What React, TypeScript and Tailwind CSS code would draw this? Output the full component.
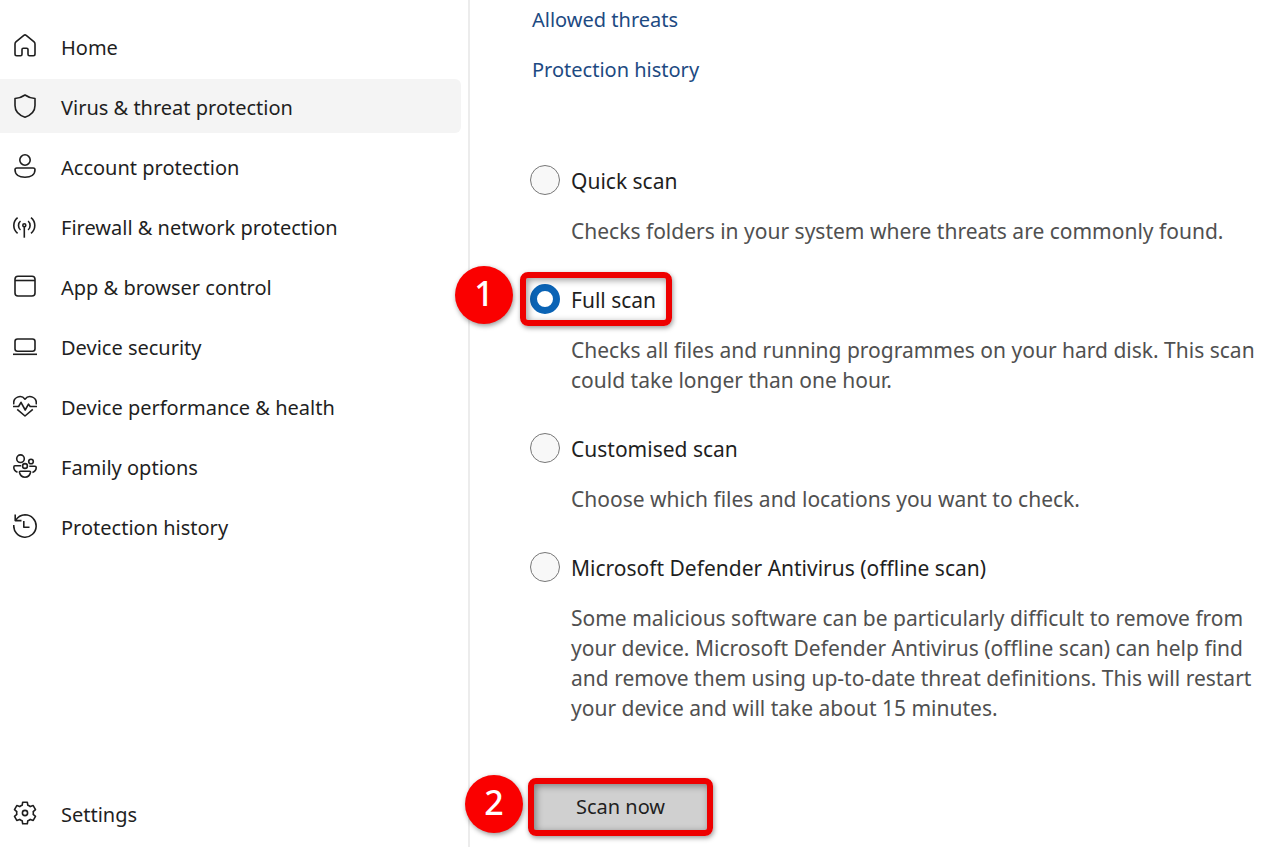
import { useState, type ReactNode } from 'react';

const navItems = [
  { id: 'home', label: 'Home', icon: <HomeIcon /> },
  { id: 'virus', label: 'Virus & threat protection', icon: <ShieldIcon /> },
  { id: 'account', label: 'Account protection', icon: <AccountIcon /> },
  { id: 'firewall', label: 'Firewall & network protection', icon: <FirewallIcon /> },
  { id: 'app', label: 'App & browser control', icon: <AppIcon /> },
  { id: 'device', label: 'Device security', icon: <DeviceIcon /> },
  { id: 'health', label: 'Device performance & health', icon: <HealthIcon /> },
  { id: 'family', label: 'Family options', icon: <FamilyIcon /> },
  { id: 'history', label: 'Protection history', icon: <HistoryIcon /> },
];

const scanOptions = [
  {
    id: 'quick',
    label: 'Quick scan',
    description: 'Checks folders in your system where threats are commonly found.',
  },
  {
    id: 'full',
    label: 'Full scan',
    description:
      'Checks all files and running programmes on your hard disk. This scan could take longer than one hour.',
    step: 1,
  },
  {
    id: 'custom',
    label: 'Customised scan',
    description: 'Choose which files and locations you want to check.',
  },
  {
    id: 'offline',
    label: 'Microsoft Defender Antivirus (offline scan)',
    description:
      'Some malicious software can be particularly difficult to remove from your device. Microsoft Defender Antivirus (offline scan) can help find and remove them using up-to-date threat definitions. This will restart your device and will take about 15 minutes.',
  },
];

function Icon({ children }: { children: ReactNode }) {
  return (
    <svg
      viewBox="0 0 24 24"
      className="w-6 h-6 shrink-0"
      fill="none"
      stroke="currentColor"
      strokeWidth="1.6"
      strokeLinejoin="round"
      aria-hidden="true"
    >
      {children}
    </svg>
  );
}

function HomeIcon() {
  return (
    <Icon>
      <path d="M10.8 1.3 2.9 7.9Q2 8.7 2 9.9V20Q2 21.7 3.7 21.7H7.6Q9 21.7 9 20.3V15.5Q9 14.2 10.3 14.2H13.7Q15 14.2 15 15.5V20.3Q15 21.7 16.4 21.7H20.3Q22 21.7 22 20V9.9Q22 8.7 21.1 7.9L13.2 1.3Q12 .4 10.8 1.3Z" />
    </Icon>
  );
}

function ShieldIcon() {
  return (
    <Icon>
      <path d="M12 1C9 3.2 6 4.2 2 4.500V11.500C2 17 5.500 21 12 23.200C18.500 21 22 17 22 11.500V4.500C18 4.200 15 3.200 12 1Z" />
    </Icon>
  );
}

function AccountIcon() {
  return (
    <Icon>
      <circle cx="12" cy="6" r="5.2" />
      <path d="M3.8 14H20.2Q22 14 22 15.8C22 20.5 18 23.2 12 23.2S2 20.5 2 15.8Q2 14 3.8 14Z" />
    </Icon>
  );
}

function FirewallIcon() {
  return (
    <Icon>
      <circle cx="11.3" cy="11.3" r="1.5" />
      <path d="M11.3 12.8V23.7" />
      <path d="M7.5 7Q5.5 8.6 5.5 11.5T7.5 16M15.1 7Q17.1 8.6 17.1 11.5T15.1 16" />
      <path d="M4.6 3.7Q.8 6.9.8 11.5T4.6 19.3M18 3.7Q21.8 6.9 21.8 11.5T18 19.3" />
    </Icon>
  );
}

function AppIcon() {
  return (
    <Icon>
      <rect x="2" y="2.2" width="20" height="19.8" rx="3" />
      <path d="M2 6.5H22" />
    </Icon>
  );
}

function DeviceIcon() {
  return (
    <Icon>
      <rect x="2" y="5" width="20" height="12.3" rx="2.5" />
      <path d="M0 20.3H24" />
    </Icon>
  );
}

function HealthIcon() {
  return (
    <Icon>
      <path d="M.8 10.4C-.3 3.2 8-.1 12 5.2C16-.1 24.3 3.2 23.2 10.4" />
      <path d="M0 12.5H5.6L8 8.3L12.2 16L15.500 10.2L17.2 12.5H24" />
      <path d="M4.2 15.3 12 22 19.8 15.3" />
    </Icon>
  );
}

function FamilyIcon() {
  return (
    <Icon>
      <circle cx="7.5" cy="4.7" r="3.8" />
      <circle cx="18" cy="7.5" r="2.3" />
      <circle cx="12" cy="12" r="2.4" />
      <path d="M8.2 11.8H2Q.8 11.8.8 13.2Q.8 16.7 4.5 18.3" />
      <path d="M16.3 12.2H22Q23.2 12.2 23.2 13.5Q23.2 17 19.4 18.6" />
      <path d="M7.5 17.3H16.5Q17.7 17.3 17.5 18.5C16.7 21.8 15 23.2 12 23.2S7.3 21.8 6.5 18.5Q6.3 17.3 7.5 17.3Z" />
    </Icon>
  );
}

function HistoryIcon() {
  return (
    <Icon>
      <path d="M.8 11A11.2 11.2 0 1 0 12 .8Q6 1 2.6 6.4" />
      <path d="M2.2 .5V6.6H8.5M10.8 7V13.2H16.5" />
    </Icon>
  );
}

function SettingsIcon() {
  return (
    <Icon>
      <path d="M14.3 1.2 14.8 4.2Q16.2 4.6 17.3 5.6L20.2 4.6 22.5 8.6 20.2 10.6Q20.500 12 20.2 13.4L22.5 15.4 20.2 19.4 17.3 18.4Q16.2 19.4 14.8 19.8L14.3 22.8H9.7L9.2 19.8Q7.8 19.4 6.7 18.4L3.8 19.4 1.5 15.4 3.8 13.4Q3.5 12 3.8 10.6L1.5 8.6 3.8 4.6 6.7 5.6Q7.8 4.6 9.2 4.2L9.7 1.2Z" />
      <circle cx="12" cy="12" r="2.6" />
    </Icon>
  );
}

function NavItem({ icon, label, active = false, onClick }: {
  icon: ReactNode;
  label: string;
  active?: boolean;
  onClick: () => void;
}) {
  return (
    <button
      onClick={onClick}
      className={`w-full h-[54px] pl-[13px] flex items-center gap-6 rounded-r-md text-left text-[20px] ${
        active ? 'bg-[#f4f4f4]' : ''
      }`}
    >
      {icon}
      <span className="pt-1">{label}</span>
    </button>
  );
}

// Red frame and numbered badge pointing out a step
function Frame({ className }: { className: string }) {
  return (
    <span
      className={`absolute pointer-events-none rounded-lg border-6 border-[#ee0000] shadow-[1px_2px_5px_rgba(0,0,0,0.4),inset_2px_2px_7px_rgba(0,0,0,0.4)] ${className}`}
    />
  );
}

function Badge({ step, className }: { step: number; className: string }) {
  return (
    <span
      className={`absolute pointer-events-none w-[58px] h-[58px] pb-1 rounded-full bg-[#fa0000] text-white text-[34px] font-medium flex items-center justify-center shadow-[1px_2px_5px_rgba(0,0,0,0.4)] ${className}`}
    >
      {step}
    </span>
  );
}

export default function App() {
  const [page, setPage] = useState('virus');
  const [scan, setScan] = useState('full');

  return (
    <div className="min-h-screen flex bg-white text-[#1f1f1f] font-['Noto_Sans','Open_Sans',sans-serif]">
      {/* Sidebar */}
      <nav className="w-[470px] shrink-0 border-r-2 border-[#ececec] pt-[19px] pb-[7px] pr-[7px] flex flex-col gap-1.5">
        {navItems.map(item => (
          <NavItem
            key={item.id}
            icon={item.icon}
            label={item.label}
            active={page === item.id}
            onClick={() => setPage(item.id)}
          />
        ))}
        <div className="mt-auto">
          <NavItem
            icon={<SettingsIcon />}
            label="Settings"
            active={page === 'settings'}
            onClick={() => setPage('settings')}
          />
        </div>
      </nav>

      {/* Scan options */}
      <main className="flex-1 min-w-0 pl-[60px] pr-6 pt-[5px] pb-3">
        <div className="pl-0.5 flex flex-col items-start gap-5 text-[20px] leading-[30px] text-[#1d4a82]">
          <a href="#allowed">Allowed threats</a>
          <a href="#history">Protection history</a>
        </div>

        <div className="mt-20 flex flex-col gap-[38px] text-[21px] leading-[30px]">
          {scanOptions.map(option => (
            <div key={option.id}>
              <label className="relative flex w-fit h-[30px] items-center gap-[11px]">
                <input
                  type="radio"
                  name="scan"
                  value={option.id}
                  checked={scan === option.id}
                  onChange={() => setScan(option.id)}
                  aria-describedby={`${option.id}-description`}
                  className="appearance-none w-[30px] h-[30px] shrink-0 rounded-full border border-[#777777] bg-[#f8f8f8] checked:border-[7px] checked:border-[#0a63b5] checked:bg-white"
                />
                <span className="pt-0.5">{option.label}</span>
                {option.step && (
                  <>
                    <Frame className="-inset-y-3 -left-2.5 -right-4" />
                    <Badge step={option.step} className="-left-[75px] -top-[18px]" />
                  </>
                )}
              </label>
              <p id={`${option.id}-description`} className="mt-[21px] pl-[41px] text-[#505050]">
                {option.description}
              </p>
            </div>
          ))}
        </div>

        <div className="relative w-[181px] mt-[57px]">
          <button className="w-full h-[54px] rounded-lg bg-[#d0d0d0] text-[20px]">Scan now</button>
          <Frame className="-inset-0.5" />
          <Badge step={2} className="-left-[65px] -top-[5px]" />
        </div>
      </main>
    </div>
  );
}
